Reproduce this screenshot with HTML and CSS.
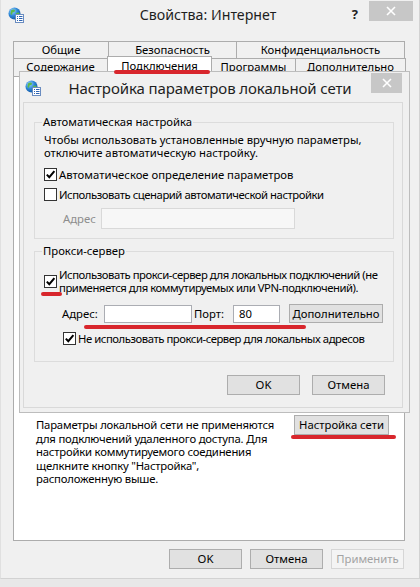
FILE: index.html
```html
<!DOCTYPE html>
<html lang="ru">
<head>
<meta charset="utf-8">
<title>Свойства: Интернет</title>
<link rel="stylesheet" href="styles.css">
</head>
<body>
<div class="window">
  <header class="titlebar">
    <span class="tb-left">
      <svg class="appicon" width="16" height="16" viewBox="0 0 16 16">
        <defs>
          <radialGradient id="gl1" cx="0.35" cy="0.3" r="0.8">
            <stop offset="0" stop-color="#9fd4ff"/>
            <stop offset="0.5" stop-color="#2b86d6"/>
            <stop offset="1" stop-color="#134f9a"/>
          </radialGradient>
        </defs>
        <circle cx="6.5" cy="6.5" r="6" fill="url(#gl1)"/>
        <path d="M3 3.5 Q5 2 7 3 L6.5 5 L4.5 5.5 L4 8 L2.5 7 Z" fill="#5cb94a"/>
        <path d="M8 6 L11 5.5 L12 8 L9.5 10 L8.5 8.5 Z" fill="#5cb94a"/>
        <rect x="7.5" y="7.5" width="8" height="8" fill="#ffffff" stroke="#6a8cc0"/>
        <path d="M9 9.5h1M11 9.5h3.5M9 11.5h1M11 11.5h3.5M9 13.5h1M11 13.5h3.5" stroke="#2e64b3" stroke-width="1"/>
      </svg>
    </span>
    <span class="tb-title">Свойства: Интернет</span>
    <span class="tb-right">
      <span class="help">?</span>
      <span class="close">
        <svg width="10" height="10" viewBox="0 0 10 10"><path d="M1 1L9 9M9 1L1 9" stroke="#ffffff" stroke-width="1.6"/></svg>
      </span>
    </span>
  </header>

  <div class="tabs">
    <div class="tabrow row1">
      <div class="tab t-general">Общие</div>
      <div class="tab t-security">Безопасность</div>
      <div class="tab t-privacy">Конфиденциальность</div>
    </div>
    <div class="tabrow row2">
      <div class="tab t-content">Содержание</div>
      <div class="tab t-conn active">Подключения</div>
      <div class="tab t-progs">Программы</div>
      <div class="tab t-adv">Дополнительно</div>
    </div>
  </div>

  <div class="panel">
    <div class="lan-row">
      <p class="lan-text">Параметры локальной сети не применяются<br>для подключений удаленного доступа. Для<br>настройки коммутируемого соединения<br>щелкните кнопку "Настройка",<br>расположенную выше.</p>
      <button class="btn lan-btn">Настройка сети</button>
    </div>
  </div>

  <footer class="footer">
    <button class="btn fbtn">OK</button>
    <button class="btn fbtn">Отмена</button>
    <button class="btn fbtn disabled">Применить</button>
  </footer>

  <section class="dialog">
    <div class="dlg-title">
      <svg class="appicon" width="16" height="16" viewBox="0 0 16 16">
        <defs>
          <radialGradient id="gl2" cx="0.35" cy="0.3" r="0.8">
            <stop offset="0" stop-color="#9fd4ff"/>
            <stop offset="0.5" stop-color="#2b86d6"/>
            <stop offset="1" stop-color="#134f9a"/>
          </radialGradient>
        </defs>
        <circle cx="6.5" cy="6.5" r="6" fill="url(#gl2)"/>
        <path d="M3 3.5 Q5 2 7 3 L6.5 5 L4.5 5.5 L4 8 L2.5 7 Z" fill="#5cb94a"/>
        <path d="M8 6 L11 5.5 L12 8 L9.5 10 L8.5 8.5 Z" fill="#5cb94a"/>
        <rect x="7.5" y="7.5" width="8" height="8" fill="#ffffff" stroke="#6a8cc0"/>
        <path d="M9 9.5h1M11 9.5h3.5M9 11.5h1M11 11.5h3.5M9 13.5h1M11 13.5h3.5" stroke="#2e64b3" stroke-width="1"/>
      </svg>
      <span class="dlg-caption">Настройка параметров локальной сети</span>
      <span class="dlg-close">
        <svg width="10" height="10" viewBox="0 0 10 10"><path d="M1 1L9 9M9 1L1 9" stroke="#ffffff" stroke-width="1.6"/></svg>
      </span>
    </div>
    <div class="dlg-body">
      <fieldset class="group g-auto">
        <legend>Автоматическая настройка</legend>
        <p class="hint">Чтобы использовать установленные вручную параметры,<br>отключите автоматическую настройку.</p>
        <div class="check c-detect">
          <span class="box"><svg width="11" height="11" viewBox="0 0 11 11"><path d="M1.8 5.6L4.3 8.2L9.4 2.2" fill="none" stroke="#000" stroke-width="2"/></svg></span>
          <span class="check-text">Автоматическое определение параметров</span>
        </div>
        <div class="check c-script">
          <span class="box"></span>
          <span class="check-text">Использовать сценарий автоматической настройки</span>
        </div>
        <div class="script-row">
          <span class="script-label">Адрес</span>
          <span class="field script-field"></span>
        </div>
      </fieldset>

      <fieldset class="group g-proxy">
        <legend>Прокси-сервер</legend>
        <div class="check c-proxy">
          <span class="box"><svg width="11" height="11" viewBox="0 0 11 11"><path d="M1.8 5.6L4.3 8.2L9.4 2.2" fill="none" stroke="#000" stroke-width="2"/></svg></span>
          <span class="check-text">Использовать прокси-сервер для локальных подключений (не<br>применяется для коммутируемых или VPN-подключений).</span>
        </div>
        <div class="proxy-row">
          <span class="addr-label">Адрес:</span>
          <span class="field addr-field"></span>
          <span class="port-label">Порт:</span>
          <span class="field port-field">80</span>
          <button class="btn adv-btn">Дополнительно</button>
        </div>
        <div class="check c-bypass">
          <span class="box"><svg width="11" height="11" viewBox="0 0 11 11"><path d="M1.8 5.6L4.3 8.2L9.4 2.2" fill="none" stroke="#000" stroke-width="2"/></svg></span>
          <span class="check-text">Не использовать прокси-сервер для локальных адресов</span>
        </div>
      </fieldset>

      <div class="dlg-buttons">
        <button class="btn dbtn">OK</button>
        <button class="btn dbtn">Отмена</button>
      </div>
    </div>
  </section>

  <span class="mark mark-tab"></span>
  <span class="mark mark-check"></span>
  <span class="mark mark-addr"></span>
  <span class="mark mark-lan"></span>
</div>
</body>
</html>
```

FILE: styles.css
```css
* { box-sizing: border-box; }

html, body {
  margin: 0;
  padding: 0;
}

body {
  width: 420px;
  height: 587px;
  overflow: hidden;
  background: #e8e8e8;
  font-family: "Noto Sans", "Open Sans", sans-serif;
  font-size: 11.3px;
  color: #000;
}

.window {
  position: relative;
  width: 420px;
  height: 579px;
  background: #f0f0f0;
  border-right: 1px solid #d2d2d2;
  border-bottom: 1px solid #d2d2d2;
  border-left: 1px solid #e0e0e0;
}

/* ---------- title bar ---------- */
.titlebar {
  height: 30px;
  display: grid;
  grid-template-columns: 1fr auto 1fr;
  align-items: start;
}

.tb-left {
  padding: 7px 0 0 7px;
  display: flex;
}

.tb-title {
  font-size: 14.2px;
  line-height: 18px;
  padding: 6px 4px 0 0;
  color: #1e1e1e;
}

.tb-right {
  display: flex;
  justify-content: flex-end;
  align-items: flex-start;
  padding: 1px 6px 0 0;
}

.help {
  font-weight: bold;
  font-size: 13px;
  line-height: 14px;
  margin: 6px 11px 0 0;
  color: #222;
}

.close {
  width: 44px;
  height: 20px;
  background: #c7c7c7;
  display: flex;
  align-items: center;
  justify-content: center;
}

/* ---------- tabs ---------- */
.tabs {
  margin: 11px 0 0 12px;
  width: 392px;
  position: relative;
  z-index: 1;
}

.tabrow {
  display: flex;
}

.row1 { height: 17px; }
.row2 { height: 18px; }

.tab {
  border: 1px solid #acacac;
  border-bottom: none;
  margin-right: -1px;
  background: #f0f0f0;
  text-align: center;
  line-height: 16px;
  white-space: nowrap;
}

.t-general { width: 96px; }
.t-security { width: 129px; }
.t-privacy { width: 169px; }

.t-content { width: 95px; }
.t-conn { width: 105px; }
.t-progs { width: 85px; }
.t-adv { width: 111px; }

.tab.active {
  background: #ffffff;
  margin-top: -2px;
  height: 21px;
  line-height: 18px;
  position: relative;
  z-index: 2;
}

/* ---------- panel ---------- */
.panel {
  margin-left: 12px;
  width: 392px;
  height: 465px;
  background: #ffffff;
  border: 1px solid #acacac;
  padding: 341px 15px 0 22px;
}

.lan-row {
  display: flex;
  justify-content: space-between;
  align-items: flex-start;
}

.lan-text {
  margin: 0;
  line-height: 13.5px;
  white-space: nowrap;
  letter-spacing: -0.2px;
}

.lan-btn {
  margin-top: -3px;
  width: 95px;
  height: 20px;
}

/* ---------- buttons ---------- */
.btn {
  font-family: inherit;
  font-size: inherit;
  color: #000;
  background: #e1e1e1;
  border: 1px solid #adadad;
  padding: 0;
  border-radius: 0;
  line-height: 16px;
  white-space: nowrap;
}

.btn.disabled {
  background: #f4f4f4;
  border-color: #d6d6d6;
  color: #a3a3a3;
}

.footer {
  display: flex;
  justify-content: flex-end;
  gap: 8px;
  padding: 8px 15px 0 0;
}

.fbtn {
  width: 73px;
  height: 20px;
}

/* ---------- dialog ---------- */
.dialog {
  position: absolute;
  left: 18px;
  top: 71px;
  width: 391px;
  background: #f0f0f0;
  border: 1px solid #bdbdbd;
  padding: 0 6px 4px 3px;
  z-index: 3;
}

.dlg-title {
  height: 30px;
  display: flex;
  align-items: flex-start;
}

.dlg-title .appicon {
  margin: 8px 0 0 2px;
  flex: none;
}

.dlg-caption {
  flex: 1;
  text-align: center;
  font-size: 15px;
  line-height: 18px;
  padding: 7px 0 0 8px;
  color: #1e1e1e;
  white-space: nowrap;
  letter-spacing: -0.1px;
}

.dlg-close {
  width: 31px;
  height: 20px;
  margin: 1px 1px 0 0;
  background: #c7c7c7;
  display: flex;
  align-items: center;
  justify-content: center;
}

.dlg-body {
  border: 1px solid #d9d9d9;
  padding: 12px 8px 12px 10px;
}

.group {
  margin: 0;
  min-width: 0;
  border: 1px solid #dcdcdc;
  padding: 4px 8px 9px 9px;
}

.group legend {
  padding: 0 1px;
  margin-left: -2px;
  line-height: 14px;
}

.g-proxy {
  margin-top: 5px;
  padding-top: 10px;
  padding-bottom: 16px;
}

.hint {
  margin: 0;
  line-height: 13px;
  white-space: nowrap;
}

.check {
  display: flex;
  align-items: center;
  line-height: 14px;
  white-space: nowrap;
}

.check-text {
  flex: none;
  line-height: 13px;
}

.c-script .check-text,
.c-proxy .check-text,
.c-bypass .check-text {
  letter-spacing: -0.45px;
}

.box {
  flex: none;
  width: 13px;
  height: 13px;
  border: 1px solid #333333;
  background: #ffffff;
  margin-right: 2px;
  display: flex;
  align-items: center;
  justify-content: center;
}

.c-detect { margin-top: 9px; }
.c-script { margin-top: 7px; }

.script-row {
  margin-top: 7px;
  display: flex;
  align-items: center;
  padding-left: 19px;
}

.script-label {
  width: 38px;
  color: #8d8d8d;
}

.field {
  display: block;
  flex: none;
  background: #ffffff;
  border: 1px solid #abadb3;
  height: 18px;
  line-height: 16px;
  padding-left: 5px;
}

.script-field {
  width: 194px;
  height: 21px;
  background: #f7f7f7;
  border-color: #d9d9d9;
}

.proxy-row {
  margin-top: 10px;
  display: flex;
  align-items: center;
  padding-left: 18px;
  white-space: nowrap;
}

.addr-label { width: 42px; flex: none; }

.addr-field { width: 88px; }

.port-label {
  width: 39px;
  margin-left: 2px;
  flex: none;
}

.port-field { width: 47px; }

.adv-btn {
  flex: none;
  margin-left: 9px;
  width: 94px;
  height: 19px;
}

.c-bypass {
  margin-top: 9px;
  padding-left: 19px;
}

.dlg-buttons {
  margin-top: 13px;
  display: flex;
  justify-content: flex-end;
  gap: 12px;
  padding-right: 9px;
}

.dbtn {
  width: 73px;
  height: 20px;
}

/* ---------- red annotation marks ---------- */
.mark {
  position: absolute;
  height: 4px;
  border-radius: 2px;
  background: #d8262c;
  z-index: 5;
}

.mark-tab { left: 113px; top: 70px; width: 96px; }
.mark-check { left: 40px; top: 292px; width: 21px; }
.mark-addr { left: 83px; top: 325px; width: 222px; }
.mark-lan { left: 290px; top: 435px; width: 105px; }
```
